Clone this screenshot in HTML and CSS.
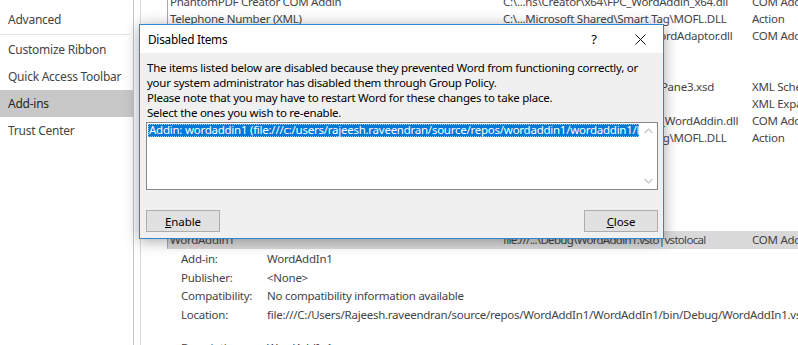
FILE: index.html
```html
<!DOCTYPE html>
<html lang="en">
<head>
    <meta charset="UTF-8">
    <title>Word Options - Add-ins</title>
    <link rel="stylesheet" href="styles.css">
</head>
<body>

<div class="window">
    <nav class="sidebar">
        <div class="nav-item">Advanced</div>
        <div class="nav-sep"></div>
        <div class="nav-item">Customize Ribbon</div>
        <div class="nav-item">Quick Access Toolbar</div>
        <div class="nav-item active">Add-ins</div>
        <div class="nav-item">Trust Center</div>
    </nav>

    <main class="content">
        <div class="addin-list">
            <div class="row"><span class="col-name">PhantomPDF Creator COM Addin</span><span class="col-loc">C:\...ns\Creator\x64\FPC_WordAddin_x64.dll</span><span class="col-type">COM Add-in</span></div>
            <div class="row"><span class="col-name">Telephone Number (XML)</span><span class="col-loc">C:\...Microsoft Shared\Smart Tag\MOFL.DLL</span><span class="col-type">Action</span></div>
            <div class="row"><span class="col-name">OneNote Notes about Word Pages</span><span class="col-loc">C:\...Office\root\Office16\ONWordAdaptor.dll</span><span class="col-type">COM Add-in</span></div>
            <div class="row"><span class="col-name"></span><span class="col-loc"></span><span class="col-type"></span></div>
            <div class="row"><span class="col-name heading">Inactive Application Add-ins</span><span class="col-loc"></span><span class="col-type"></span></div>
            <div class="row"><span class="col-name">ActionsPane Schema for Add-Ins</span><span class="col-loc">C:\...Shared\VSTO\10.0\ActionsPane3.xsd</span><span class="col-type">XML Schema</span></div>
            <div class="row"><span class="col-name">Microsoft Actions Pane 3</span><span class="col-loc"></span><span class="col-type">XML Expansion Pack</span></div>
            <div class="row"><span class="col-name">Microsoft Word Add-in</span><span class="col-loc">C:\...PhantomPDF\Creator\FPC_WordAddin.dll</span><span class="col-type">COM Add-in</span></div>
            <div class="row"><span class="col-name">Measurement Converter</span><span class="col-loc">C:\...Microsoft Shared\Smart Tag\MOFL.DLL</span><span class="col-type">Action</span></div>
            <div class="row"><span class="col-name"></span><span class="col-loc"></span><span class="col-type"></span></div>
            <div class="row"><span class="col-name heading">Document Related Add-ins</span><span class="col-loc"></span><span class="col-type"></span></div>
            <div class="row"><span class="col-name">No Document Related Add-ins</span><span class="col-loc"></span><span class="col-type"></span></div>
            <div class="row"><span class="col-name"></span><span class="col-loc"></span><span class="col-type"></span></div>
            <div class="row"><span class="col-name heading">Disabled Application Add-ins</span><span class="col-loc"></span><span class="col-type"></span></div>
            <div class="row selected"><span class="col-name">WordAddin1</span><span class="col-loc tight">file:///...\Debug\WordAddin1.vsto|vstolocal</span><span class="col-type">COM Add-in</span></div>
        </div>

        <div class="details">
            <span class="label">Add-in:</span><span>WordAddIn1</span>
            <span class="label">Publisher:</span><span>&lt;None&gt;</span>
            <span class="label">Compatibility:</span><span>No compatibility information available</span>
            <span class="label">Location:</span><span>file:///C:/Users/Rajeesh.raveendran/source/repos/WordAddIn1/WordAddIn1/bin/Debug/WordAddIn1.vsto|vstolocal</span>
            <span class="label spaced">Description:</span><span class="spaced">WordAddIn1</span>
        </div>
    </main>
</div>

<div class="dialog">
    <div class="dialog-title">
        <span class="title-text">Disabled Items</span>
        <span class="title-btn">?</span>
        <span class="title-btn">
            <svg width="11" height="11" viewBox="0 0 11 11"><path d="M0.5 0.5 L10.5 10.5 M10.5 0.5 L0.5 10.5" stroke="#111" stroke-width="1" fill="none"/></svg>
        </span>
    </div>
    <div class="dialog-body">
        <p class="msg">The items listed below are disabled because they prevented Word from functioning correctly, or<br>your system administrator has disabled them through Group Policy.</p>
        <p class="msg">Please note that you may have to restart Word for these changes to take place.</p>
        <p class="msg">Select the ones you wish to re-enable.</p>

        <div class="listbox">
            <div class="list-items">
                <div class="list-item selected">Addin: wordaddin1 (file:///c:/users/rajeesh.raveendran/source/repos/wordaddin1/wordaddin1/bin/debug/wordaddin1.vsto|vstolocal)</div>
            </div>
            <div class="scrollbar">
                <svg width="17" height="17" viewBox="0 0 17 17"><path d="M4.5 10 L8.5 6 L12.5 10" stroke="#c4c4c4" stroke-width="1.2" fill="none"/></svg>
                <svg width="17" height="17" viewBox="0 0 17 17"><path d="M4.5 7 L8.5 11 L12.5 7" stroke="#c4c4c4" stroke-width="1.2" fill="none"/></svg>
            </div>
        </div>

        <div class="buttons">
            <button class="btn"><u>E</u>nable</button>
            <button class="btn"><u>C</u>lose</button>
        </div>
    </div>
</div>

</body>
</html>
```

FILE: styles.css
```css
body {
    margin: 0;
    width: 798px;
    height: 345px;
    overflow: hidden;
    position: relative;
    background: #fff;
    font-family: 'Noto Sans', 'Open Sans', sans-serif;
    font-size: 11.5px;
    letter-spacing: -0.25px;
    color: #444;
}

.window {
    display: flex;
    height: 345px;
}

/* left navigation */
.sidebar {
    width: 133px;
    flex-shrink: 0;
    border-right: 1px solid #c6c6c6;
    padding-top: 6px;
    font-size: 12px;
    letter-spacing: -0.25px;
}
.nav-item {
    height: 27px;
    line-height: 27px;
    padding-left: 8px;
    color: #444;
    white-space: nowrap;
}
.nav-item.active {
    background: #c8c8c8;
    color: #262626;
}
.nav-sep {
    height: 1px;
    width: 130px;
    margin: 1px 0 1px;
    background: #e3e3e3;
}

/* add-ins panel */
.content {
    flex: 1;
    margin-left: 6px;
    border-left: 1px solid #dadada;
    min-width: 0;
}
.addin-list {
    margin-top: -7px;
    margin-left: 26px;
    border-left: 1px solid #a8a8a8;
    border-bottom: 1px solid #d8d8d8;
}
.row {
    display: flex;
    height: 17px;
    line-height: 17px;
    padding-left: 2px;
    white-space: nowrap;
    color: #444;
}
.row.selected { background: #d9d9d9; }
.col-name { width: 333px; flex-shrink: 0; overflow: hidden; }
.col-name.heading { font-weight: bold; }
.col-loc { width: 249px; flex-shrink: 0; overflow: hidden; }
.col-loc.tight { letter-spacing: -0.7px; }
.col-type { flex-shrink: 0; }

.details {
    display: grid;
    grid-template-columns: 86px auto;
    margin-left: 40px;
    padding-top: 1px;
    line-height: 18.5px;
    white-space: nowrap;
    color: #444;
}
.details .spaced { margin-top: 15px; }

/* dialog over the page */
.dialog {
    position: absolute;
    left: 139px;
    top: 24px;
    width: 525px;
    height: 215px;
    box-sizing: border-box;
    border: 1px solid #2b86d4;
    background: #f0f0f0;
    box-shadow: 0 2px 14px rgba(0, 0, 0, 0.35);
    display: flex;
    flex-direction: column;
    color: #000;
}
.dialog-title {
    height: 28px;
    background: #fff;
    display: flex;
    align-items: center;
}
.title-text {
    flex: 1;
    padding-left: 8px;
    font-size: 11.8px;
}
.title-btn {
    width: 46px;
    height: 28px;
    display: flex;
    align-items: center;
    justify-content: center;
    font-size: 13px;
}

.dialog-body {
    flex: 1;
    display: flex;
    flex-direction: column;
    padding: 7px 5px 6px 6px;
}
.msg {
    margin: 0;
    padding-left: 1px;
    line-height: 15px;
    white-space: nowrap;
}

.listbox {
    margin-top: 2px;
    height: 68px;
    box-sizing: border-box;
    border: 1px solid #828790;
    background: #fff;
    display: flex;
}
.list-items {
    flex: 1;
    min-width: 0;
    padding: 1px;
}
.list-item {
    height: 13px;
    line-height: 12px;
    padding-left: 1px;
    white-space: nowrap;
    overflow: hidden;
}
.list-item.selected {
    background: #0078d7;
    color: #fff;
    outline: 1px dotted #9cc8ee;
    outline-offset: -1px;
}
.scrollbar {
    width: 17px;
    display: flex;
    flex-direction: column;
    justify-content: space-between;
    background: #fff;
}
.scrollbar svg { display: block; }

.buttons {
    margin-top: auto;
    display: flex;
    justify-content: space-between;
}
.btn {
    width: 74px;
    height: 22px;
    background: #e1e1e1;
    border: 1px solid #adadad;
    font-family: 'Noto Sans', 'Open Sans', sans-serif;
    font-size: 11.5px;
    letter-spacing: -0.1px;
    color: #000;
    padding: 0;
}
```
